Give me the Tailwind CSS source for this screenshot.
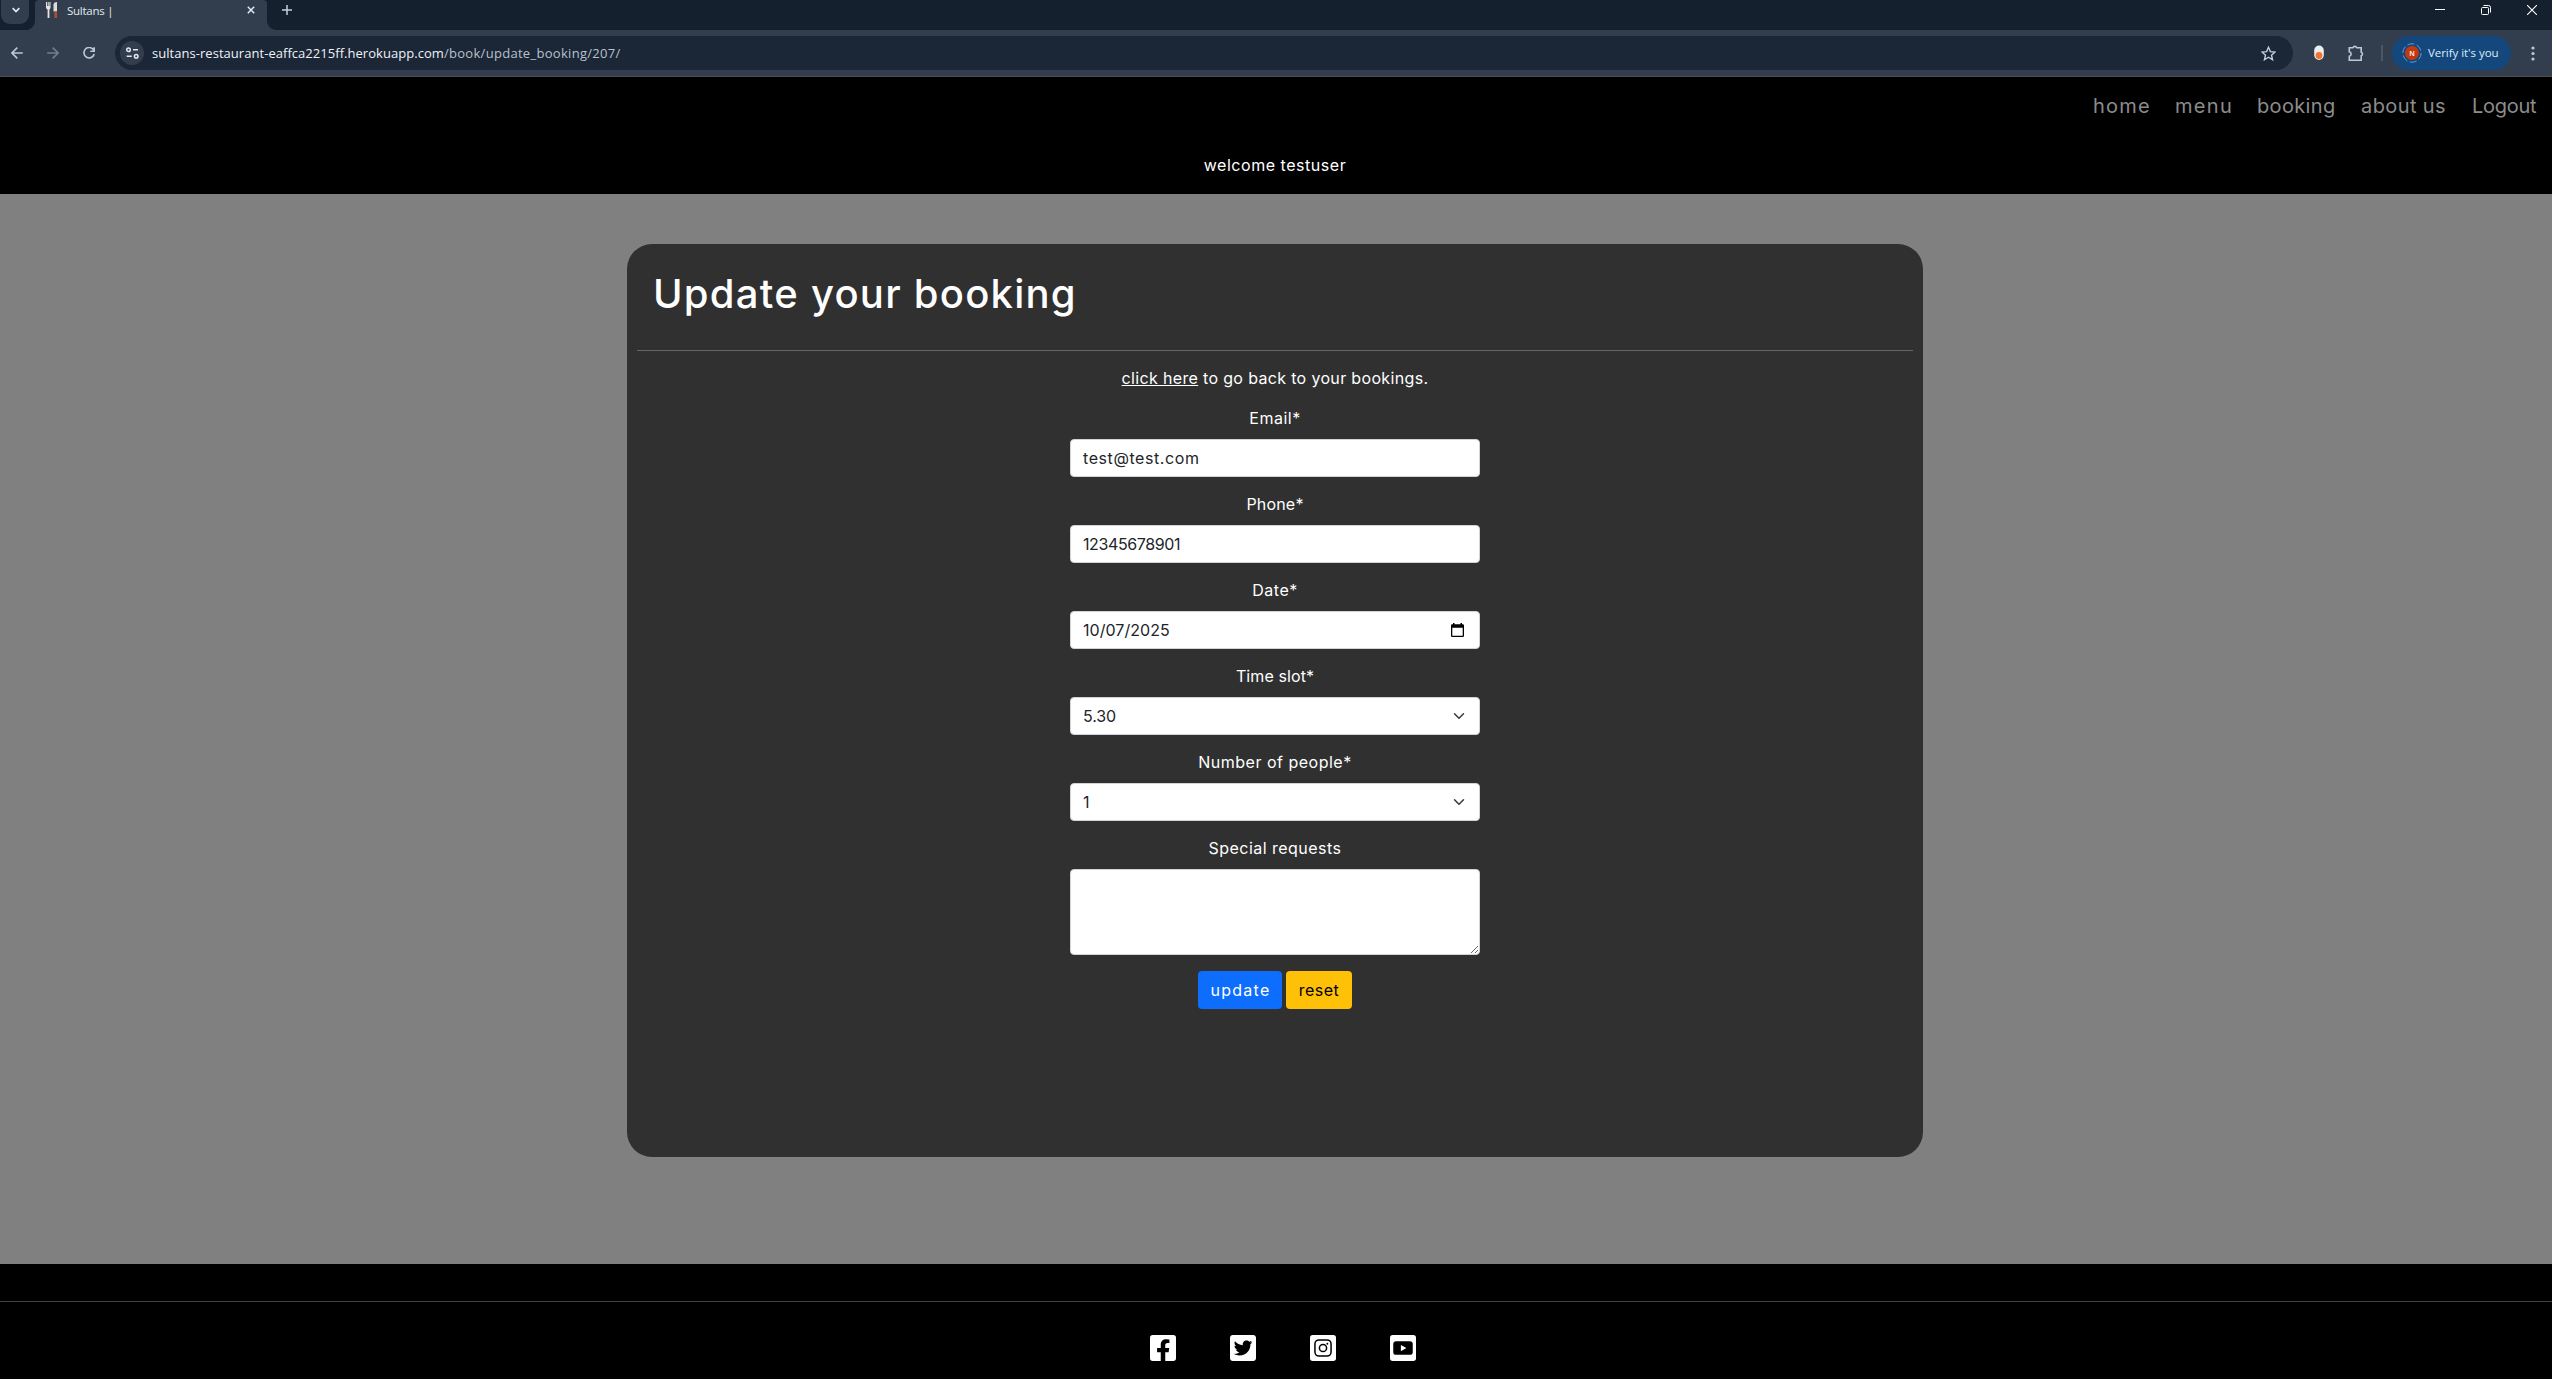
<!DOCTYPE html>
<html lang="en">
<head>
<meta charset="utf-8">
<title>Sultans |</title>
<script src="https://cdn.jsdelivr.net/npm/@tailwindcss/browser@4"></script>
</head>
<body class="flex h-[1379px] w-[2552px] flex-col overflow-hidden bg-black font-['Inter',sans-serif] text-base text-white">

<!-- Browser window -->
<div class="h-[77px] shrink-0 border-b border-[#4a4d50] bg-[#323e4e] font-['Open_Sans',sans-serif] text-[#e3e8ee]">
  <div class="flex h-[30px] bg-[#14202e]">
    <div class="flex w-[29px] items-start pl-px">
      <div class="flex h-6 w-[28px] justify-center rounded-b-[9px] bg-[#323e4e] pl-px">
        <svg class="mt-[6px] size-2" viewBox="0 0 8 8" fill="none" stroke="#e3e8ee" stroke-width="1.7"><path d="M.7 2.2 4 5.5l3.3-3.3"/></svg>
      </div>
    </div>
    <svg class="h-[30px] w-[6px]" viewBox="0 0 6 30"><path d="M6 20v10H-4C2 30 6 26 6 20z" fill="#323e4e"/></svg>
    <div class="flex h-[30px] w-[232px] items-start rounded-t-[4px] bg-[#323e4e] pl-[11px]">
      <svg class="mt-[2px] h-4 w-3" viewBox="0 0 12 16"><path d="M0 0h1v4h.7V0h1v4h.7V0h1.1v5.500Q4.500 7 3.400 7.400V16H1.600V7.400Q0 7 0 5.500z" fill="#e7e4df"/><path d="M7.500 2Q8 0 11 0v9.500H7.500z" fill="#dddcda"/><path d="M8.200 9.500H11V16H8.500z" fill="#a5532b"/></svg>
      <span class="ml-[9px] mt-[3px] w-[180px] text-[11.5px] leading-4 tracking-[-0.25px]">Sultans |</span>
      <svg class="mt-[6px] size-2" viewBox="0 0 8 8" stroke="#e3e8ee" stroke-width="1.5"><path d="m.8.8 6.4 6.4m0-6.4L.8 7.2"/></svg>
    </div>
    <svg class="h-[30px] w-[10px]" viewBox="0 0 10 30"><path d="M0 20v10h10C4 30 0 26 0 20z" fill="#323e4e"/></svg>
    <svg class="ml-[5px] mt-[5px] size-[10px]" viewBox="0 0 10 10" stroke="#c5ced9" stroke-width="1.5"><path d="M5 0v10M0 5h10"/></svg>
    <div class="ml-auto flex pr-[15px] pt-[5px]">
      <svg class="mr-[36px] size-[10px]" viewBox="0 0 10 10" stroke="#fff"><path d="M0 4.500h10"/></svg>
      <svg class="mr-[36px] size-[10px]" viewBox="0 0 10 10" fill="none" stroke="#fff"><rect x=".5" y="2.500" width="7" height="7" rx="1"/><path d="M2.500.5h5q2 0 2 2v5"/></svg>
      <svg class="size-[10px]" viewBox="0 0 10 10" stroke="#fff" stroke-width="1.1"><path d="m0 0 10 10M10 0 0 10"/></svg>
    </div>
  </div>
  <div class="flex h-[46px] items-center">
    <svg class="ml-[11px] size-3" viewBox="0 0 12 12" fill="none" stroke="#bec7d3" stroke-width="1.6"><path d="M11.800 6H1M6.300.6.9 6l5.400 5.400"/></svg>
    <svg class="ml-[24px] size-3" viewBox="0 0 12 12" fill="none" stroke="#727d8d" stroke-width="1.6"><path d="M.2 6H11M5.700.6 11.100 6l-5.400 5.400"/></svg>
    <svg class="ml-[24px] size-3" viewBox="0 0 12 12" fill="none" stroke="#bec7d3" stroke-width="1.6"><path d="M10.700 3.200A5.200 5.200 0 1 0 11.200 7M11.200.2v4H7.300"/></svg>
    <div class="ml-[20px] flex h-[34px] w-[2178px] items-center rounded-full bg-[#1b2636] pl-[5px] pr-[17px]">
      <div class="flex size-6 items-center justify-center rounded-full bg-[#323e4e]">
        <svg class="h-3 w-[13px]" viewBox="0 0 13 12" fill="none" stroke="#e3e8ee" stroke-width="1.5"><circle cx="2.5" cy="2.7" r="1.8"/><path d="M7 2.700h5M.7 9.300h5"/><circle cx="10.2" cy="9.3" r="1.8"/></svg>
      </div>
      <span class="ml-2 text-[13px] leading-5 tracking-[0.04px] text-[#eef2f7]">sultans-restaurant-eaffca2215ff.herokuapp.com</span><span class="text-[13px] leading-5 tracking-[0.3px] text-[#b9c1cc]">/book/update_booking/207/</span>
      <svg class="ml-auto size-[15px]" viewBox="0 0 24 24" fill="none" stroke="#c5ced9" stroke-width="2.2"><path d="m12 2 3 7 7.500.6-5.700 5 1.700 7.400L12 18l-6.500 4 1.700-7.400-5.700-5L9 9z"/></svg>
    </div>
    <svg class="ml-[21px] h-4 w-[10px]" viewBox="0 0 10 16"><rect x=".2" y=".5" width="9.6" height="14.5" rx="4.8" fill="#ececec"/><circle cx="5" cy="10.5" r="3.4" fill="#f0762c"/></svg>
    <svg class="ml-[24px] size-[17px]" viewBox="0 0 17 17" fill="none" stroke="#bec7d3" stroke-width="1.6"><path d="M1.300 2.800h3.600a2 2 0 0 1 3.800 0h4.500v4.400a1.900 1.900 0 0 1 0 3.600v4.400H1.300v-3.900a2.300 2.300 0 0 0 0-4.500z"/></svg>
    <div class="ml-[16px] h-4 w-[2px] bg-[#4a5666]"></div>
    <div class="ml-[9px] flex h-[34px] w-[119px] items-center rounded-full bg-[#14487c] pl-[10px]">
      <svg class="size-5" viewBox="0 0 20 20"><circle cx="10" cy="10" r="9.2" fill="none" stroke="#5f9bd6" stroke-width="1" stroke-dasharray="7 2.6"/><circle cx="10" cy="10" r="7" fill="#c5380f"/><text x="10" y="12.6" text-anchor="middle" font-size="7" font-weight="600" fill="#fff">N</text></svg>
      <span class="ml-[6px] whitespace-nowrap text-[11.5px] leading-4 tracking-[-0.05px] text-[#dcebfa]">Verify it's you</span>
    </div>
    <svg class="ml-[20px] h-[15px] w-1" viewBox="0 0 4 15" fill="#bec7d3"><circle cx="2" cy="2" r="1.6"/><circle cx="2" cy="7.5" r="1.6"/><circle cx="2" cy="13" r="1.6"/></svg>
  </div>
</div>

<!-- Site header -->
<header class="h-[117px] shrink-0 bg-black">
  <nav class="flex h-[76px] justify-end pr-[14px] pt-[14px] text-xl leading-[30px] text-[#8c8c8c]">
    <a class="w-[82px] tracking-[1.2px]">home</a>
    <a class="w-[82px] tracking-[1.3px]">menu</a>
    <a class="w-[104px] tracking-[0.35px]">booking</a>
    <a class="w-[111px] tracking-[0.4px]">about us</a>
    <a class="w-[66px] tracking-[-0.28px]">Logout</a>
  </nav>
  <p class="pr-[2px] text-center leading-6 tracking-[0.54px]">welcome testuser</p>
</header>

<!-- Booking form -->
<main class="flex h-[1070px] shrink-0 justify-center bg-[#808080] pr-[2px] pt-[50px]">
  <section class="h-[913px] w-[1296px] rounded-[25px] bg-[#303030] px-[10px] pt-[26px]">
    <h1 class="pl-4 text-[40px] font-medium leading-[48px] tracking-[1.25px]">Update your booking</h1>
    <hr class="mt-[32px] border-[#666]">
    <div class="mx-auto mt-[15px] flex w-[410px] flex-col text-center leading-6">
      <p class="mb-4 tracking-[0.34px]"><a class="underline">click here</a> to go back to your bookings.</p>
      <label class="mb-[9px] tracking-[0.5px]">Email*</label>
      <div class="mb-[15px] flex h-[38px] items-center rounded-[4px] border border-[#ced4da] bg-white px-3 tracking-[0.58px] text-[#212529]">test@test.com</div>
      <label class="mb-[9px] tracking-[0.18px]">Phone*</label>
      <div class="mb-[15px] flex h-[38px] items-center rounded-[4px] border border-[#ced4da] bg-white px-3 tracking-[-0.4px] text-[#212529]">12345678901</div>
      <label class="mb-[9px] tracking-[0.5px]">Date*</label>
      <div class="mb-[15px] flex h-[38px] items-center justify-between rounded-[4px] border border-[#ced4da] bg-white pl-3 pr-[15px] tracking-[0.04px] text-[#212529]">10/07/2025
        <svg class="h-[14px] w-[13px]" viewBox="0 0 13 14" fill="#000"><path fill-rule="evenodd" d="M2 0h1.500v1.200h6V0H11v1.200h.8Q13 1.200 13 2.400v10.300q0 1.300-1.200 1.300H1.200Q0 14 0 12.700V2.400q0-1.200 1.200-1.200H2zM1.300 4.700v8h10.400v-8z"/></svg>
      </div>
      <label class="mb-[9px] tracking-[0.1px]">Time slot*</label>
      <div class="mb-[15px] flex h-[38px] items-center justify-between rounded-[4px] border border-[#ced4da] bg-white px-3 tracking-[-0.1px] text-[#212529]">5.30
        <svg class="h-3 w-4" viewBox="0 0 16 16" fill="none" stroke="#343a40" stroke-width="2" stroke-linecap="round" stroke-linejoin="round"><path d="m2 5 6 6 6-6"/></svg>
      </div>
      <label class="mb-[9px] tracking-[0.5px]">Number of people*</label>
      <div class="mb-[15px] flex h-[38px] items-center justify-between rounded-[4px] border border-[#ced4da] bg-white px-3 text-[#212529]">1
        <svg class="h-3 w-4" viewBox="0 0 16 16" fill="none" stroke="#343a40" stroke-width="2" stroke-linecap="round" stroke-linejoin="round"><path d="m2 5 6 6 6-6"/></svg>
      </div>
      <label class="mb-[9px] tracking-[0.47px]">Special requests</label>
      <div class="mb-4 flex h-[86px] items-end justify-end rounded-[4px] border border-[#ced4da] bg-white p-px">
        <svg class="size-[7px]" viewBox="0 0 7 7" stroke="#555" stroke-width=".9"><path d="M0 7 7 0M4 7l3-3"/></svg>
      </div>
      <div class="flex justify-center gap-1">
        <button class="h-[38px] w-[84px] rounded-[4px] bg-[#0d6efd] pl-px tracking-[1.3px]">update</button>
        <button class="h-[38px] w-[66px] rounded-[4px] bg-[#ffc107] tracking-[0.5px] text-black">reset</button>
      </div>
    </div>
  </section>
</main>

<!-- Footer -->
<footer class="grow bg-black pt-[37px]">
  <hr class="border-[#404040]">
  <div class="flex gap-[54px] pl-[1150px] pt-[31px]">
    <svg class="h-[30px] w-[26px]" viewBox="0 0 448 512" fill="#fff"><path d="M400 32H48A48 48 0 0 0 0 80v352a48 48 0 0 0 48 48h137.250V327.690h-63V256h63v-54.640c0-62.150 37-96.480 93.670-96.480 27.140 0 55.520 4.840 55.520 4.840v61h-31.270c-30.810 0-40.420 19.120-40.420 38.730V256h68.780l-11 71.690h-57.780V480H400a48 48 0 0 0 48-48V80a48 48 0 0 0-48-48z"/></svg>
    <svg class="h-[30px] w-[26px]" viewBox="0 0 448 512" fill="#fff"><path d="M400 32H48C21.500 32 0 53.500 0 80v352c0 26.500 21.500 48 48 48h352c26.500 0 48-21.500 48-48V80c0-26.500-21.500-48-48-48zm-48.900 158.800c.2 2.800.2 5.700.2 8.500 0 86.700-66 186.600-186.600 186.600-37.200 0-71.700-10.800-100.700-29.400 5.300.6 10.400.8 15.800.8 30.700 0 58.900-10.400 81.400-28-28.800-.6-53-19.500-61.300-45.500 10.100 1.500 19.200 1.500 29.600-1.200-30-6.100-52.500-32.500-52.500-64.400v-.8c8.700 4.900 18.900 7.900 29.600 8.300a65.447 65.447 0 0 1-29.200-54.600c0-12.200 3.200-23.400 8.900-33.100 32.300 39.800 80.800 65.800 135.200 68.600-9.300-44.500 24-80.600 64-80.600 18.900 0 35.900 7.900 47.900 20.700 14.800-2.800 29-8.300 41.600-15.800-4.900 15.200-15.200 28-28.800 36.100 13.200-1.400 26-5.100 37.800-10.200-8.900 13.100-20.100 24.700-32.900 34z"/></svg>
    <svg class="h-[30px] w-[26px]" viewBox="0 0 448 512"><rect y="32" width="448" height="448" rx="48" fill="#fff"/><g fill="none" stroke="#000" stroke-width="26"><rect x="85" y="117" width="278" height="278" rx="70"/><circle cx="224" cy="256" r="62"/></g><circle cx="299" cy="181" r="17"/></svg>
    <svg class="h-[30px] w-[26px]" viewBox="0 0 448 512"><rect y="32" width="448" height="448" rx="48" fill="#fff"/><rect x="56" y="138" width="336" height="236" rx="50"/><path d="m187 203 95 54-95 54z" fill="#fff"/></svg>
  </div>
</footer>
</body>
</html>
